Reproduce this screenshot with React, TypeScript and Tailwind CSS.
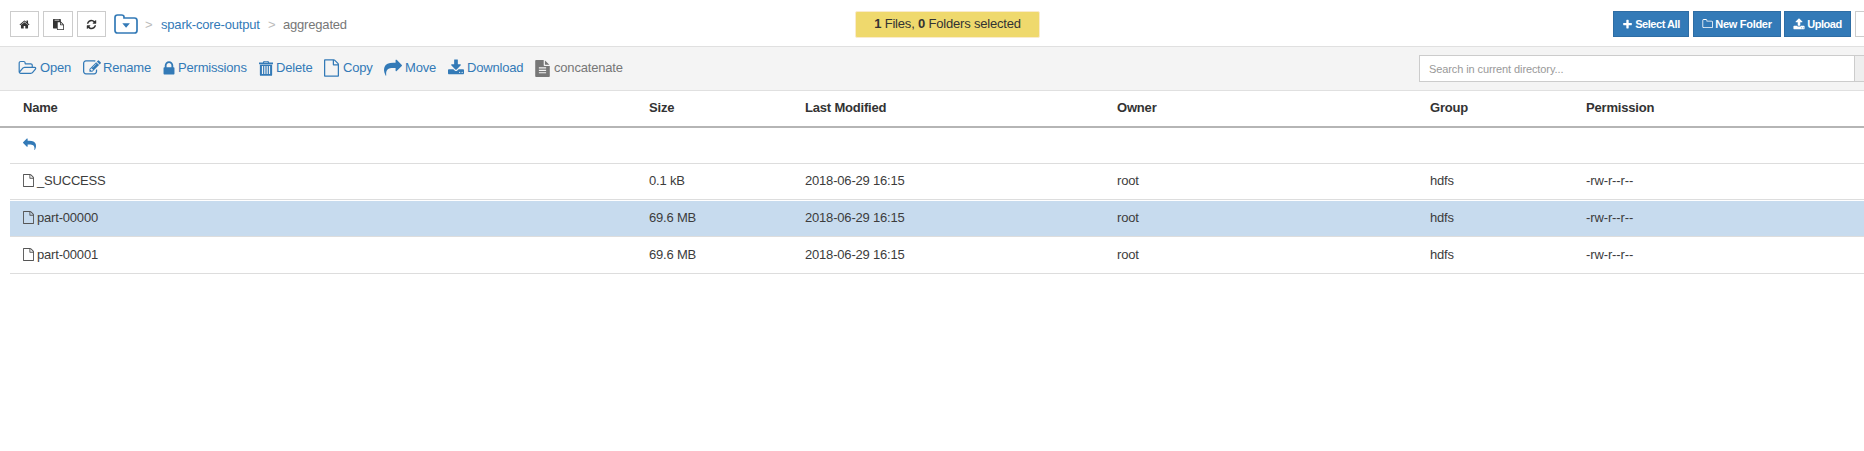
import React from "react";

const paths = {
  home: "M1472 992v480q0 26-19 45t-45 19h-384v-384h-256v384h-384q-26 0-45-19t-19-45v-480q0-1 .5-3t.5-3l575-474 575 474q1 2 1 6zm223-69l-62 74q-8 9-21 11h-3q-13 0-21-7l-692-577-692 577q-12 8-24 7-13-2-21-11l-62-74q-8-10-7-23.5t11-21.5l719-599q32-26 76-26t76 26l244 204v-195q0-14 9-23t23-9h192q14 0 23 9t9 23v408l219 182q10 8 11 21.5t-7 23.5z",
  paste: "M768 1664h896v-640h-416q-40 0-68-28t-28-68v-416h-384v1152zm256-1440v-64q0-13-9.5-22.5t-22.5-9.5h-704q-13 0-22.5 9.5t-9.5 22.5v64q0 13 9.5 22.5t22.5 9.5h704q13 0 22.5-9.5t9.5-22.5zm256 672h299l-299-299v299zm512 128v672q0 40-28 68t-68 28h-960q-40 0-68-28t-28-68v-160h-544q-40 0-68-28t-28-68v-1344q0-40 28-68t68-28h1088q40 0 68 28t28 68v328q21 13 36 28l408 408q28 28 48 76t20 88z",
  refresh: "M1639 1056q0 5-1 7-64 268-268 434.5t-478 166.5q-146 0-282.5-55t-243.5-157l-129 129q-19 19-45 19t-45-19-19-45v-448q0-26 19-45t45-19h448q26 0 45 19t19 45-19 45l-137 137q71 66 161 102t187 36q134 0 250-65t186-179q11-17 53-117 8-23 30-23h192q13 0 22.5 9.5t9.5 22.5zm25-800v448q0 26-19 45t-45 19h-448q-26 0-45-19t-19-45 19-45l138-138q-148-137-349-137-134 0-250 65t-186 179q-11 17-53 117-8 23-30 23h-199q-13 0-22.5-9.5t-9.5-22.5v-7q65-268 270-434.5t480-166.5q146 0 284 55.5t245 156.5l130-129q19-19 45-19t45 19 19 45z",
  folder: "M1600 1312v-704q0-40-28-68t-68-28h-704q-40 0-68-28t-28-68v-64q0-40-28-68t-68-28h-320q-40 0-68 28t-28 68v960q0 40 28 68t68 28h1216q40 0 68-28t28-68zm128-704v704q0 92-66 158t-158 66h-1216q-92 0-158-66t-66-158v-960q0-92 66-158t158-66h320q92 0 158 66t66 158v32h672q92 0 158 66t66 158z",
  open: "M1845 931q0-35-53-35h-1088q-40 0-85.5 21.5t-71.5 52.5l-294 363q-18 24-18 40 0 35 53 35h1088q40 0 86-22t71-53l294-363q18-22 18-39zm-1141-163h768v-160q0-40-28-68t-68-28h-576q-40 0-68-28t-28-68v-64q0-40-28-68t-68-28h-320q-40 0-68 28t-28 68v853l256-315q44-53 116-87.5t140-34.5zm1269 163q0 62-46 120l-295 363q-43 53-116 87.5t-140 34.5h-1088q-92 0-158-66t-66-158v-960q0-92 66-158t158-66h320q92 0 158 66t66 158v32h544q92 0 158 66t66 158v160h192q54 0 99 24.5t67 70.5q15 32 15 68z",
  edit: "M888 1184l116-116-152-152-116 116v56h96v96h56zm440-720q-16-16-33 1l-350 350q-17 17-1 33t33-1l350-350q17-17 1-33zm80 594v190q0 119-84.5 203.5t-203.5 84.5h-832q-119 0-203.5-84.5t-84.5-203.5v-832q0-119 84.5-203.5t203.5-84.5h832q63 0 117 25 15 7 18 23 3 17-9 29l-49 49q-14 14-32 8-23-6-45-6h-832q-66 0-113 47t-47 113v832q0 66 47 113t113 47h832q66 0 113-47t47-113v-126q0-13 9-22l64-64q15-15 35-7t20 29zm-96-738l288 288-672 672h-288v-288zm444 132l-92 92-288-288 92-92q28-28 68-28t68 28l152 152q28 28 28 68t-28 68z",
  lock: "M640 768h512v-192q0-106-75-181t-181-75-181 75-75 181v192zm832 96v576q0 40-28 68t-68 28h-960q-40 0-68-28t-28-68v-576q0-40 28-68t68-28h32v-192q0-184 132-316t316-132 316 132 132 316v192h32q40 0 68 28t28 68z",
  trash: "M640 96h512l96 176h416v176h-1536v-176h416zm80 96l-48 80h448l-48-80zM224 512h1344v1120q0 96-96 96h-1152q-96 0-96-96zm224 128v896h128v-896zm256 0v896h128v-896zm256 0v896h128v-896zm256 0v896h128v-896z",
  file: "M1596 380q28 28 48 76t20 88v1152q0 40-28 68t-68 28h-1344q-40 0-68-28t-28-68v-1600q0-40 28-68t68-28h896q40 0 88 20t76 48zm-444-244v376h376q-10-29-22-41l-313-313q-12-12-41-22zm384 1528v-1024h-416q-40 0-68-28t-28-68v-416h-768v1536h1280z",
  share: "M1792 640q0 26-19 45l-512 512q-19 19-45 19t-45-19-19-45v-256h-224q-98 0-175.5 6t-154 21.5-133 42.5-105.5 69.5-80 101-48.5 138.5-17.5 181q0 55 5 123 0 6 2.5 23.5t2.5 26.5q0 15-8.5 25t-23.5 10q-16 0-28-17-7-9-13-22t-13.5-30-10.5-24q-127-285-127-451 0-199 53-333 162-403 875-403h224v-256q0-26 19-45t45-19 45 19l512 512q19 19 19 45z",
  download: "M1344 1344q0-26-19-45t-45-19-45 19-19 45 19 45 45 19 45-19 19-45zm256 0q0-26-19-45t-45-19-45 19-19 45 19 45 45 19 45-19 19-45zm128-224v320q0 40-28 68t-68 28h-1472q-40 0-68-28t-28-68v-320q0-40 28-68t68-28h465l135 136q58 56 136 56t136-56l136-136h464q40 0 68 28t28 68zm-325-569q17 41-14 70l-448 448q-18 19-45 19t-45-19l-448-448q-31-29-14-70 17-39 59-39h256v-448q0-26 19-45t45-19h256q26 0 45 19t19 45v448h256q42 0 59 39z",
  upload: "M1344 1472q0-26-19-45t-45-19-45 19-19 45 19 45 45 19 45-19 19-45zm256 0q0-26-19-45t-45-19-45 19-19 45 19 45 45 19 45-19 19-45zm128-224v320q0 40-28 68t-68 28h-1472q-40 0-68-28t-28-68v-320q0-40 28-68t68-28h427q21 56 70.5 92t110.5 36h256q61 0 110.5-36t70.5-92h427q40 0 68 28t28 68zm-325-648q-17 40-59 40h-256v448q0 26-19 45t-45 19h-256q-26 0-45-19t-19-45v-448h-256q-42 0-59-40-17-39 14-69l448-448q18-19 45-19t45 19l448 448q31 30 14 69z",
  plus: "M1600 736v192q0 40-28 68t-68 28h-416v416q0 40-28 68t-68 28h-192q-40 0-68-28t-28-68v-416h-416q-40 0-68-28t-28-68v-192q0-40 28-68t68-28h416v-416q0-40 28-68t68-28h192q40 0 68 28t28 68v416h416q40 0 68 28t28 68z",
  text: "M1596 476q14 14 28 36h-472v-472q22 14 36 28zm-476 164h544v1056q0 40-28 68t-68 28h-1344q-40 0-68-28t-28-68v-1600q0-40 28-68t68-28h800v544q0 40 28 68t68 28zm160 736v-64q0-14-9-23t-23-9h-704q-14 0-23 9t-9 23v64q0 14 9 23t23 9h704q14 0 23-9t9-23zm0-256v-64q0-14-9-23t-23-9h-704q-14 0-23 9t-9 23v64q0 14 9 23t23 9h704q14 0 23-9t9-23zm0-256v-64q0-14-9-23t-23-9h-704q-14 0-23 9t-9 23v64q0 14 9 23t23 9h704q14 0 23-9t9-23z",
};

type IconName = keyof typeof paths;

function Icon({ name, className, box = "0 0 1792 1792" }: { name: IconName; className: string; box?: string }) {
  return (
    <svg viewBox={box} fill="currentColor" fillRule={name === "trash" ? "evenodd" : "nonzero"} className={`shrink-0 ${className}`} aria-hidden="true">
      <path d={paths[name]} />
    </svg>
  );
}

const actions: { icon: IconName; label: string; width: string; iconClass: string; gap: string; box?: string; muted?: boolean }[] = [
  { icon: "open", label: "Open", width: "w-[65px]", iconClass: "h-[18px] w-[19px]", gap: "gap-[3px]", box: "0 0 2048 1792" },
  { icon: "edit", label: "Rename", width: "w-[80px]", iconClass: "size-[18px]", gap: "gap-[2px]" },
  { icon: "lock", label: "Permissions", width: "w-[96px]", iconClass: "h-[17px] w-[12px]", gap: "gap-[3px]", box: "320 0 1152 1792" },
  { icon: "trash", label: "Delete", width: "w-[65px]", iconClass: "h-[17px] w-[14px]", gap: "gap-[3px]", box: "128 64 1536 1728" },
  { icon: "file", label: "Copy", width: "w-[60px]", iconClass: "h-[18px] w-[15px]", gap: "gap-[4px]", box: "128 0 1536 1792" },
  { icon: "share", label: "Move", width: "w-[64px]", iconClass: "size-[18px]", gap: "gap-[3px]" },
  { icon: "download", label: "Download", width: "w-[87px]", iconClass: "h-[18px] w-[16px]", gap: "gap-[3px]", box: "64 0 1664 1792" },
  { icon: "text", label: "concatenate", width: "w-[100px]", iconClass: "h-[17px] w-[15px]", gap: "gap-[4px]", box: "128 0 1536 1792", muted: true },
];

const files = [
  { name: "_SUCCESS", size: "0.1 kB", selected: false },
  { name: "part-00000", size: "69.6 MB", selected: true },
  { name: "part-00001", size: "69.6 MB", selected: false },
];

const columns = "grid grid-cols-[626px_156px_312px_313px_156px_301px]";

export default function App() {
  return (
    <div className="h-[451px] w-full overflow-hidden bg-white font-['Liberation_Sans',Arial,sans-serif] text-[13px] leading-[18px] tracking-[-0.19px] text-[#333]">
      <header className="flex h-[46px] items-start pl-[10px] pt-[11px]">
        <div className="flex w-[845px] shrink-0">
          <button className="mr-[4px] flex h-[26px] w-[29px] shrink-0 items-center justify-center border border-[#ccc]"><Icon name="home" className="size-[11px]" /></button>
          <button className="mr-[4px] flex h-[26px] w-[30px] shrink-0 items-center justify-center border border-[#ccc]"><Icon name="paste" className="size-[11px]" /></button>
          <button className="flex h-[26px] w-[29px] shrink-0 items-center justify-center border border-[#ccc]"><Icon name="refresh" className="size-[11px]" /></button>
          <svg viewBox="0 0 24 20" className="ml-[8px] mt-[3px] h-[20px] w-[24px] shrink-0 text-[#337ab7]" aria-hidden="true">
            <path d="M1 3.5Q1 1 3.5 1h4Q10 1 10 3v1h10.500Q23 4 23 6.500v10Q23 19 20.500 19h-17Q1 19 1 16.500z" fill="none" stroke="currentColor" strokeWidth="1.7" />
            <path d="M8.300 9.300h7.600l-3.800 4.400z" fill="currentColor" />
          </svg>
          <nav className="flex pt-[5px]">
            <span className="ml-[7px] w-[16px] text-[#bbb]">&gt;</span>
            <a className="w-[107px] whitespace-nowrap text-[#337ab7]">spark-core-output</a>
            <span className="w-[15px] text-[#bbb]">&gt;</span>
            <span className="text-[#777]">aggregated</span>
          </nav>
        </div>
        <div className="flex h-[27px] w-[185px] shrink-0 items-center justify-center rounded-[2px] border border-[#faebcc] bg-[#efd96d] pb-[2px]">
          <span className="whitespace-nowrap tracking-[-0.19px]"><b>1</b> Files, <b>0</b> Folders selected</span>
        </div>
        <div className="ml-[573px] flex shrink-0 text-[11px] font-bold tracking-[-0.45px] text-white">
          <button className="mr-[4px] flex h-[26px] w-[76px] items-center justify-center gap-[2px] whitespace-nowrap border border-[#2e6da4] bg-[#337ab7]"><Icon name="plus" className="size-[11px]" />Select All</button>
          <button className="mr-[3px] flex h-[26px] w-[88px] items-center justify-center gap-[2px] whitespace-nowrap border border-[#2e6da4] bg-[#337ab7] tracking-[-0.3px]"><Icon name="folder" className="h-[12px] w-[11px]" box="0 0 1728 1792" />New Folder</button>
          <button className="mr-[4px] flex h-[26px] w-[67px] items-center justify-center gap-[2px] whitespace-nowrap border border-[#2e6da4] bg-[#337ab7]"><Icon name="upload" className="size-[12px]" />Upload</button>
          <button className="h-[26px] w-[30px] border border-[#ccc]" aria-label="More" />
        </div>
      </header>
      <section className="flex h-[45px] items-start border-b border-t border-[#e0e0e0] bg-[#f4f4f4] pl-[18px]">
        <div className="flex w-[1401px] shrink-0 pt-[11px] text-[#337ab7]">
          {actions.map((a) => (
            <a key={a.label} className={`flex h-[20px] shrink-0 items-center whitespace-nowrap ${a.width} ${a.gap} ${a.muted ? "text-[#777]" : ""}`}>
              <Icon name={a.icon} className={a.iconClass} box={a.box} />
              <span>{a.label}</span>
            </a>
          ))}
        </div>
        <div className="mt-[8px] flex h-[27px] w-[475px] shrink-0 border border-[#ccc] bg-white">
          <span className="w-[435px] border-r border-[#ccc] pl-[9px] pt-[4px] text-[11px] tracking-[-0.1px] text-[#999]">Search in current directory...</span>
          <span className="grow bg-[#eee]" />
        </div>
      </section>
      <main>
        <div className={`${columns} h-[37px] border-b-2 border-[#b5b5b5] pl-[23px] pt-[8px] font-bold`}>
          <span>Name</span><span>Size</span><span>Last Modified</span><span>Owner</span><span>Group</span><span>Permission</span>
        </div>
        <div className="ml-[10px] h-[36px] border-b border-[#ddd] pl-[13px] pt-[10px] text-[#337ab7]">
          <Icon name="share" className="size-[13px] -scale-x-100" />
        </div>
        {files.map((f) => (
          <div key={f.name} className={`${columns} ml-[10px] border-b border-[#ddd] pl-[13px] text-[#3c3c3c] ${f.selected ? "mt-px h-[36px] bg-[#c7dbee] pt-[8px]" : f.name === "_SUCCESS" ? "h-[36px] pt-[8px]" : "h-[37px] pt-[9px]"}`}>
            <span className="flex items-start gap-[3px]">
              <Icon name="file" className="mt-[2px] h-[13px] w-[11px] text-[#555]" box="128 0 1536 1792" />{f.name}
            </span>
            <span>{f.size}</span><span>2018-06-29 16:15</span><span>root</span><span>hdfs</span><span className="tracking-[-0.12px]">-rw-r--r--</span>
          </div>
        ))}
      </main>
    </div>
  );
}
